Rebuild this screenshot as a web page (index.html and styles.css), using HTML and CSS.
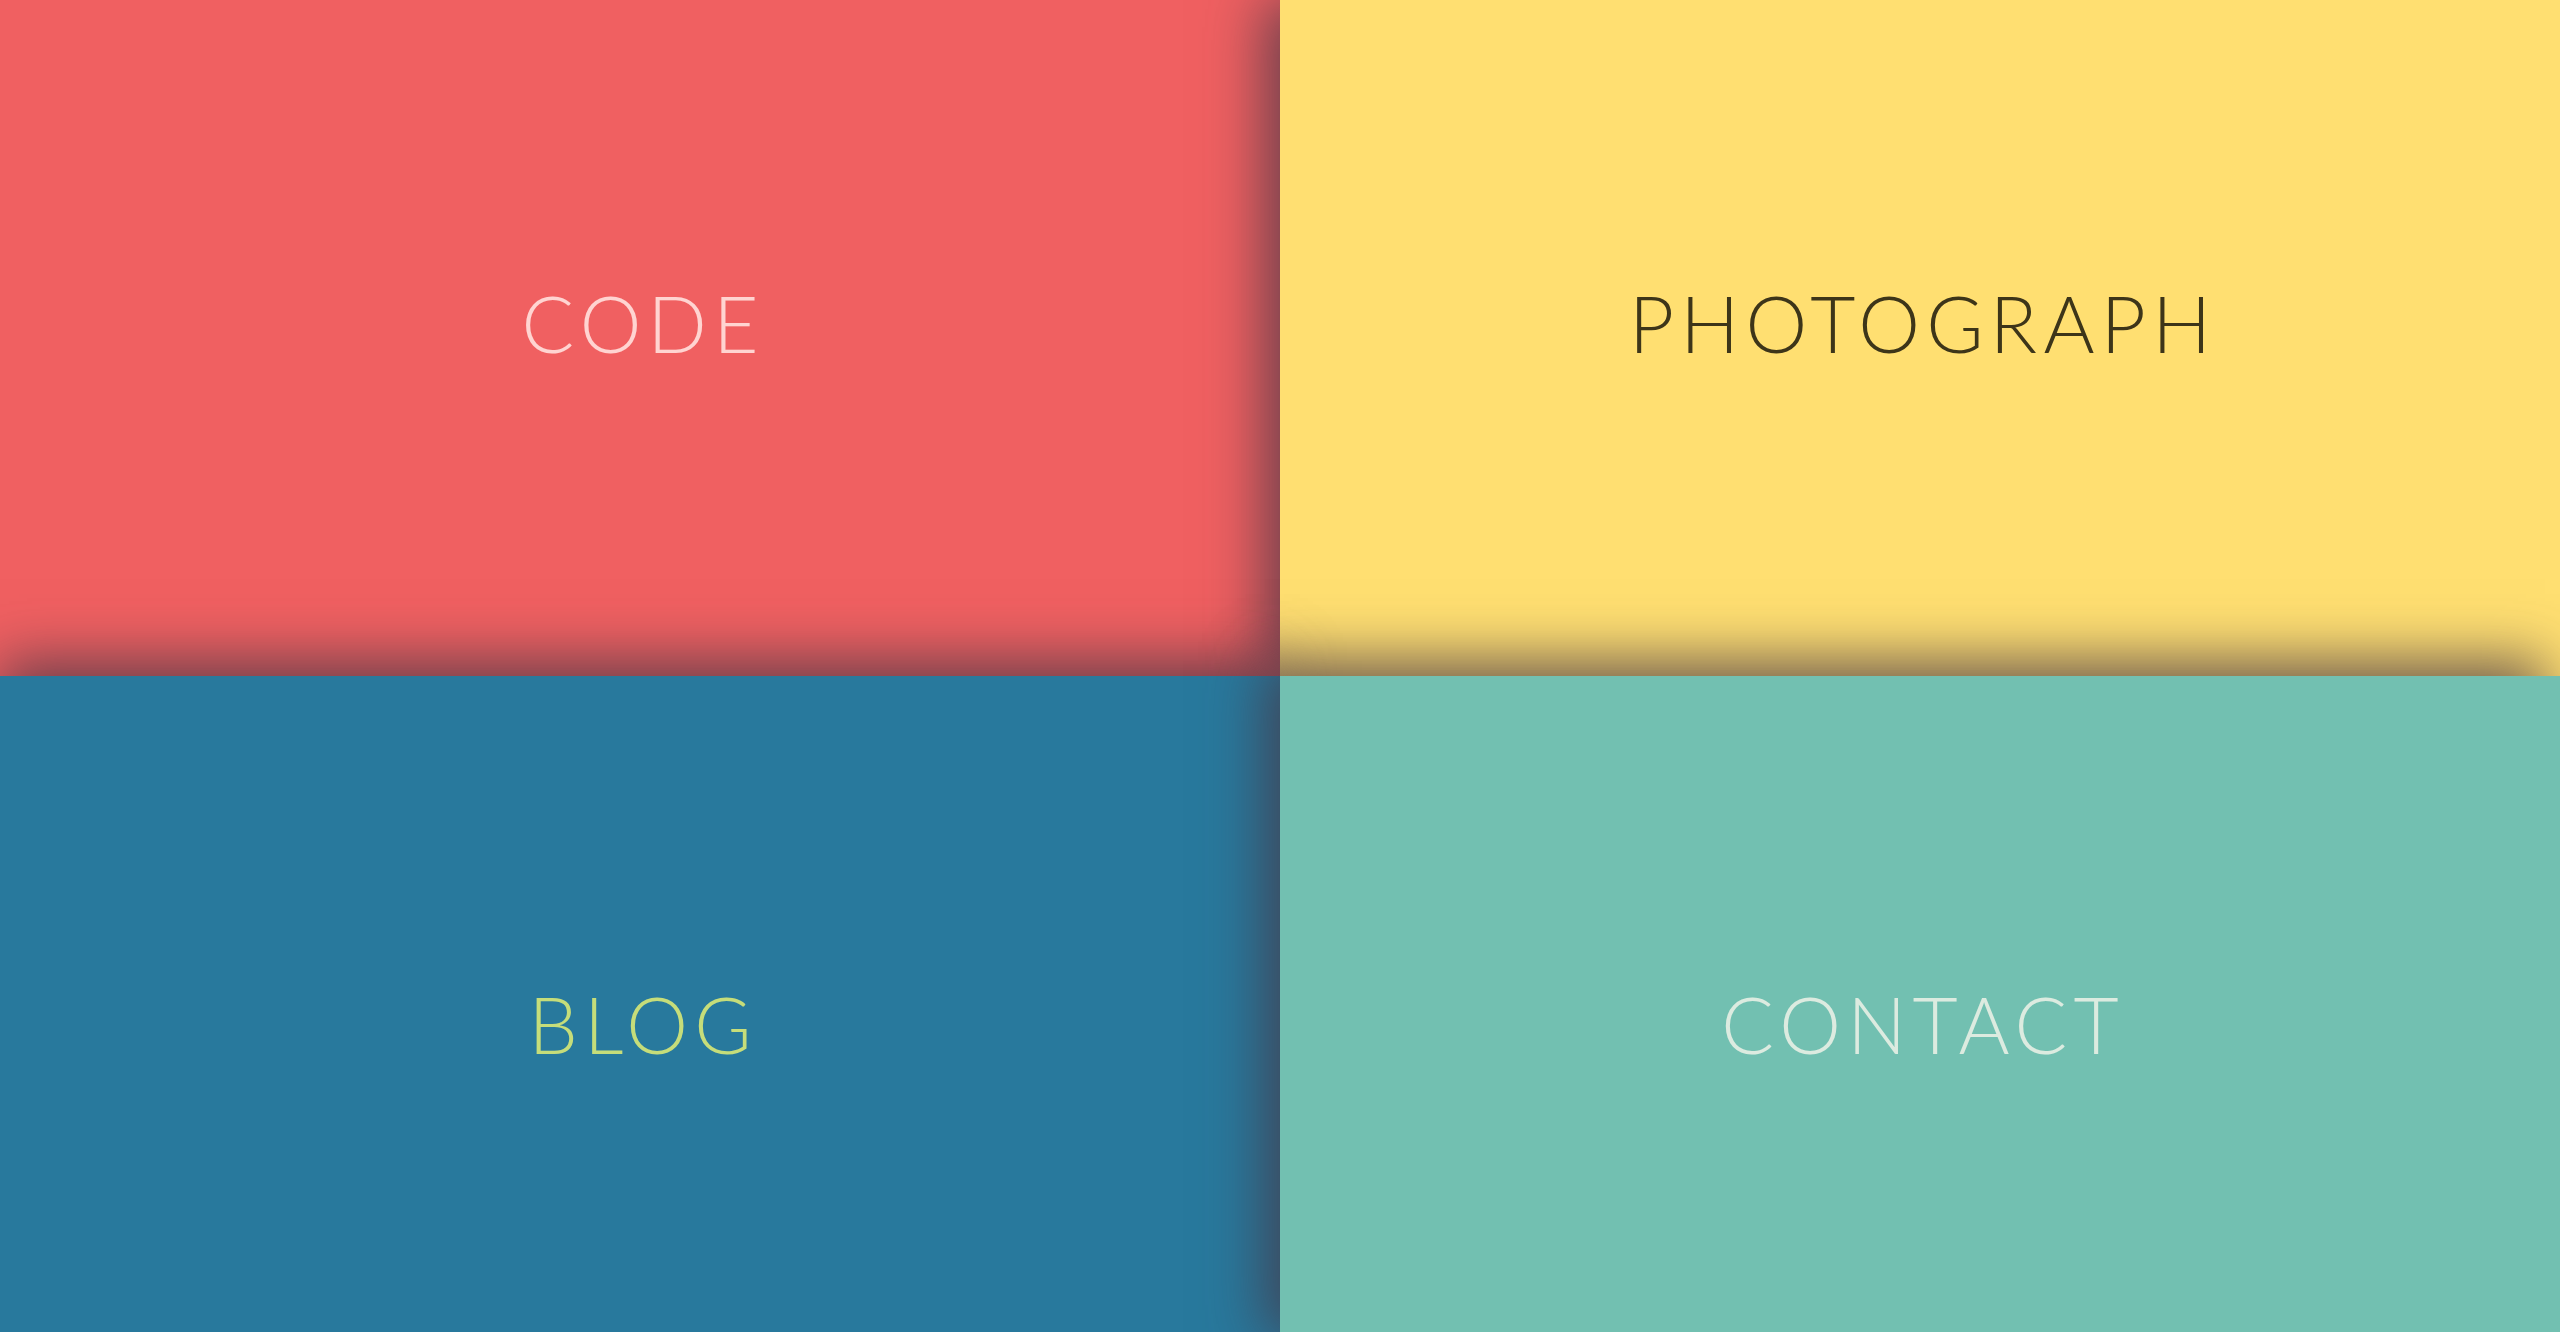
FILE: index.html
```html
<!DOCTYPE html>
<html lang="en">
<head>
<meta charset="utf-8">
<title>Tiles</title>
<link rel="stylesheet" href="styles.css">
</head>
<body>
<main class="grid">
  <a class="tile tile-top tile-code" href="#"><span class="label">CODE</span></a>
  <a class="tile tile-top tile-photo" href="#"><span class="label">PHOTOGRAPH</span></a>
  <a class="tile tile-bottom tile-blog" href="#"><span class="label">BLOG</span></a>
  <a class="tile tile-bottom tile-contact" href="#"><span class="label">CONTACT</span></a>
</main>
</body>
</html>
```

FILE: styles.css
```css
html, body {
  margin: 0;
  padding: 0;
  height: 100%;
  overflow: hidden;
}

.grid {
  display: grid;
  grid-template-columns: 1280px 1280px;
  grid-template-rows: 676px 676px;
  width: 2560px;
}

.tile {
  position: relative;
  display: flex;
  align-items: center;
  justify-content: center;
  box-sizing: border-box;
  text-decoration: none;
  font-family: "Lato", "Open Sans", sans-serif;
  font-weight: 300;
  font-size: 78px;
  line-height: 1;
  letter-spacing: 0.08em;
}

.tile-top {
  padding-bottom: 30px;
}

.tile-bottom {
  padding-top: 20px;
}

.label {
  display: block;
  margin-right: -0.08em;
}

.tile-code {
  background: #f06061;
  color: #ffd4d1;
}

.tile-photo {
  background: #ffdf71;
  color: #3d3519;
  box-shadow: -15px 0 55px rgba(70, 55, 70, 0.8);
}

.tile-blog {
  background: #28799d;
  color: #c6dd7a;
  box-shadow: 0 -15px 55px rgba(70, 55, 70, 0.8);
}

.tile-contact {
  background: #72c0b1;
  color: #dcebe0;
  box-shadow: -15px -15px 55px rgba(70, 55, 70, 0.8);
}
```
